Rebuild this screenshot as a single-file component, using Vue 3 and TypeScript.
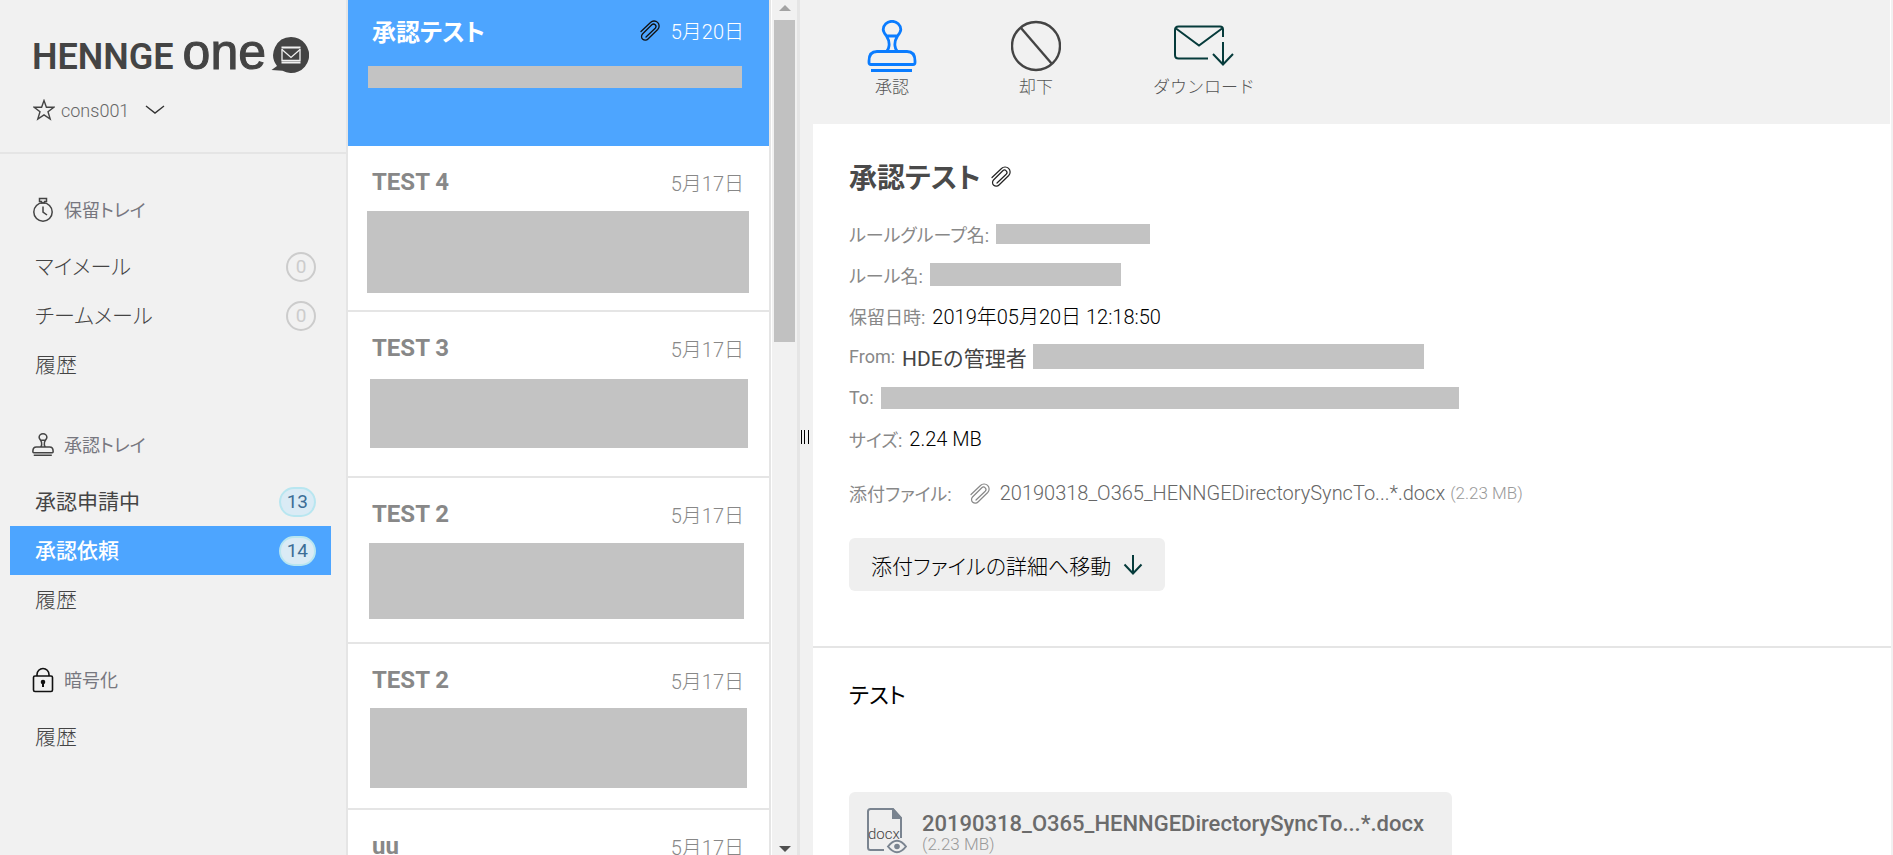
<script setup lang="ts">
interface NavItem {
  label: string
  count?: number
  strong?: boolean
  active?: boolean
}
interface NavSection {
  icon: 'timer' | 'stamp' | 'lock'
  title: string
  items: NavItem[]
}
interface Mask {
  width: number
  height: number
  top: number
  left: number
}
interface Mail {
  subject: string
  date: string
  selected?: boolean
  attached?: boolean
  mask?: Mask
}
interface MetaRow {
  label: string
  value?: string
  soft?: boolean
  mask?: { width: number; height: number }
}

const sections: NavSection[] = [
  {
    icon: 'timer',
    title: '保留トレイ',
    items: [{ label: 'マイメール', count: 0 }, { label: 'チームメール', count: 0 }, { label: '履歴' }],
  },
  {
    icon: 'stamp',
    title: '承認トレイ',
    items: [
      { label: '承認申請中', count: 13, strong: true },
      { label: '承認依頼', count: 14, strong: true, active: true },
      { label: '履歴' },
    ],
  },
  { icon: 'lock', title: '暗号化', items: [{ label: '履歴' }] },
]

const mails: Mail[] = [
  { subject: '承認テスト', date: '5月20日', selected: true, attached: true, mask: { width: 374, height: 22, top: 20, left: 1 } },
  { subject: 'TEST 4', date: '5月17日', mask: { width: 382, height: 82, top: 13, left: 0 } },
  { subject: 'TEST 3', date: '5月17日', mask: { width: 378, height: 69, top: 15, left: 3 } },
  { subject: 'TEST 2', date: '5月17日', mask: { width: 375, height: 76, top: 13, left: 2 } },
  { subject: 'TEST 2', date: '5月17日', mask: { width: 377, height: 80, top: 12, left: 3 } },
  { subject: 'uu', date: '5月17日' },
]

const meta: MetaRow[] = [
  { label: 'ルールグループ名:', mask: { width: 154, height: 20 } },
  { label: 'ルール名:', mask: { width: 191, height: 23 } },
  { label: '保留日時:', value: '2019年05月20日 12:18:50' },
  { label: 'From:', value: 'HDEの管理者', soft: true, mask: { width: 391, height: 25 } },
  { label: 'To:', mask: { width: 578, height: 22 } },
  { label: 'サイズ:', value: '2.24 MB' },
]

const fileName = '20190318_O365_HENNGEDirectorySyncTo...*.docx'
const fileSize = '(2.23 MB)'

const clipPath =
  'M1 11.5L10.5 2.5A5 5 0 0 1 17.7 9.5L8 19A3.7 3.7 0 0 1 2.5 14L11.8 4.8A2.3 2.3 0 0 1 15.2 8.2L6 17'
const stampPath =
  'M19.5 16C17.5 13.5 16.2 12 16.2 9.6A8.8 8.3 0 0 1 33.8 9.6C33.8 12 32.5 13.5 30.5 16C28 20 27.5 23 28 26Q28.3 29 30 31M19.5 16C22 20 22.5 23 22 26Q21.7 29 20 31M19.5 16H30.5M10 31.5H40Q48 31.5 48 41V42.5Q48 44.5 46 44.5H4Q2 44.5 2 42.5V41Q2 31.5 10 31.5ZM4 50.5H45'
</script>

<template>
  <div class="app">
    <aside class="sidebar">
      <header class="brand">
        <div class="logo">
          <span class="logo-company">HENNGE</span>
          <span class="logo-product">one</span>
          <svg class="logo-bubble" width="38" height="38" viewBox="0 0 38 38" aria-hidden="true">
            <path d="M20 1a18 18 0 1 1-8.5 33.800L0.500 34 6 30A18 18 0 0 1 20 1Z" fill="#444" />
            <g fill="none" stroke="#f1f1f1" stroke-width="1.300">
              <path d="M11 13v11.500h18V13" /><path d="M11 13.500l9 8 9-8" />
              <path d="M10.500 11.500h19M10.500 26.500h19" stroke-width="2" />
            </g>
          </svg>
        </div>
        <button class="account" type="button">
          <svg width="22" height="22" viewBox="0 0 22 22" aria-hidden="true">
            <path d="M11 1.500l2.400 6.700 7.400.1-5.800 4.400 2.200 7.300L11 15.800 4.800 20 7 12.700 1.200 8.300l7.400-.1z" fill="none" stroke="#444" stroke-width="1.400" />
          </svg>
          <span class="account-name">cons001</span>
          <svg class="chevron" width="20" height="10" viewBox="0 0 20 10" aria-hidden="true">
            <path d="M1 1l9 7 9-7" fill="none" stroke="#333" stroke-width="1.400" />
          </svg>
        </button>
      </header>
      <nav class="nav">
        <section v-for="section in sections" :key="section.title" class="nav-section">
          <h2 class="nav-title">
            <svg v-if="section.icon === 'timer'" width="22" height="26" viewBox="0 0 22 26" fill="none" stroke="#444" stroke-width="1.500" aria-hidden="true">
              <circle cx="11" cy="15" r="9.200" />
              <path d="M7.500 4.500V1.500h7v3h-2v1.500h-3V4.500zM11 9.500v5.500l4 3" />
            </svg>
            <svg v-else-if="section.icon === 'stamp'" width="22" height="26" viewBox="0 0 50 54" fill="none" stroke="#444" stroke-width="3.500" aria-hidden="true">
              <path :d="stampPath" />
            </svg>
            <svg v-else width="22" height="26" viewBox="0 0 22 26" fill="none" stroke="#111" stroke-width="1.600" aria-hidden="true">
              <rect x="1.500" y="9" width="19" height="15.500" rx="1.500" />
              <path d="M5 9V7.500a6 6 0 0 1 12 0V9" />
              <circle cx="11" cy="15" r="1.500" fill="#111" /><path d="M11 15v5" stroke-width="2" />
            </svg>
            <span class="nav-title-text">{{ section.title }}</span>
          </h2>
          <a
            v-for="item in section.items"
            :key="item.label"
            href="#"
            class="nav-item"
            :class="{ strong: item.strong, active: item.active }"
          >
            <span class="nav-label">{{ item.label }}</span>
            <span v-if="item.count !== undefined" class="badge" :class="{ filled: item.count > 0 }">{{ item.count }}</span>
          </a>
        </section>
      </nav>
    </aside>

    <main class="list">
      <a v-for="(mail, i) in mails" :key="i" href="#" class="mail" :class="{ selected: mail.selected }">
        <span class="mail-head">
          <span class="subject">{{ mail.subject }}</span>
          <svg v-if="mail.attached" width="20" height="21" viewBox="0 0 20 21" fill="none" stroke="#111" stroke-width="1.300" stroke-linecap="round" aria-hidden="true">
            <path :d="clipPath" />
          </svg>
          <time class="date">{{ mail.date }}</time>
        </span>
        <span
          v-if="mail.mask"
          class="mask mail-mask"
          :style="{
            width: mail.mask.width + 'px',
            height: mail.mask.height + 'px',
            marginTop: mail.mask.top + 'px',
            marginLeft: mail.mask.left + 'px',
          }"
        ></span>
      </a>
    </main>

    <div class="scrollbar" aria-hidden="true">
      <svg width="12" height="6" viewBox="0 0 12 6"><path d="M0 6L6 0l6 6z" fill="#a3a3a3" /></svg>
      <div class="thumb"></div>
      <svg class="scroll-down" width="12" height="6" viewBox="0 0 12 6"><path d="M0 0h12L6 6z" fill="#505050" /></svg>
    </div>

    <div class="splitter" role="separator" aria-orientation="vertical">
      <svg width="9" height="14" viewBox="0 0 9 14"><path d="M.5 0v14M3.500 0v14M7.500 0v14" stroke="#000" stroke-width="1" /></svg>
    </div>

    <article class="detail">
      <div class="toolbar">
        <button type="button" class="tool">
          <svg width="50" height="54" viewBox="0 0 50 54" fill="none" stroke="#0a7cff" stroke-width="2.800" aria-hidden="true">
            <path :d="stampPath" />
          </svg>
          <span>承認</span>
        </button>
        <button type="button" class="tool">
          <svg width="50" height="54" viewBox="0 0 50 54" fill="none" stroke="#444" stroke-width="2.400" aria-hidden="true">
            <circle cx="25" cy="26" r="24" /><path d="M10 8l31 36" />
          </svg>
          <span>却下</span>
        </button>
        <button type="button" class="tool">
          <svg width="60" height="54" viewBox="0 0 60 54" fill="none" stroke="#063b3b" stroke-width="2" aria-hidden="true">
            <path d="M34 38.500H4.500Q1 38.500 1 35V10Q1 6.500 4.500 6.500H46Q49 6.500 49 9.500V17" />
            <path d="M2 8.500l23 17 23-17" />
            <path d="M49 22v22.500M39 34l10 10.500L59 34" />
          </svg>
          <span>ダウンロード</span>
        </button>
      </div>

      <header class="message">
        <h1 class="message-title">
          <span>承認テスト</span>
          <svg width="20" height="21" viewBox="0 0 20 21" fill="none" stroke="#222" stroke-width="1.200" stroke-linecap="round" aria-hidden="true">
            <path :d="clipPath" />
          </svg>
        </h1>
        <dl class="meta">
          <div v-for="row in meta" :key="row.label" class="meta-row">
            <dt>{{ row.label }}</dt>
            <dd>
              <span v-if="row.value" :class="{ soft: row.soft }">{{ row.value }}</span>
              <span v-if="row.mask" class="mask" :style="{ width: row.mask.width + 'px', height: row.mask.height + 'px' }"></span>
            </dd>
          </div>
        </dl>
        <div class="attachment">
          <span class="attachment-label">添付ファイル:</span>
          <svg width="20" height="21" viewBox="0 0 20 21" fill="none" stroke="#888" stroke-width="1.200" stroke-linecap="round" aria-hidden="true">
            <path :d="clipPath" />
          </svg>
          <a href="#" class="attachment-name">{{ fileName }}</a>
          <span class="size">{{ fileSize }}</span>
        </div>
        <button type="button" class="jump">
          <span>添付ファイルの詳細へ移動</span>
          <svg width="20" height="20" viewBox="0 0 20 20" fill="none" stroke="#063b3b" stroke-width="2" aria-hidden="true">
            <path d="M10 0v18M1.500 9.500l8.500 9 8.500-9" />
          </svg>
        </button>
      </header>

      <section class="body">
        <p class="body-text">テスト</p>
        <a href="#" class="file-card">
          <svg class="file-icon" width="40" height="46" viewBox="0 0 40 46" aria-hidden="true">
            <path d="M17 42H3.500Q1 42 1 39.500V3.500Q1 1 3.500 1H26l8 9v20" fill="none" stroke="#7a8490" stroke-width="2" />
            <path d="M25 0h1l9 10v1H25z" fill="#7a8490" />
            <text x="1" y="31" class="file-ext">docx</text>
            <path d="M21 38.500Q30 27 39 38.500Q30 50 21 38.500Z" fill="#efefef" stroke="#7a8490" stroke-width="2" />
            <circle cx="30" cy="38.500" r="2.800" fill="#7a8490" />
          </svg>
          <span class="file-text">
            <span class="file-name">{{ fileName }}</span>
            <span class="size">{{ fileSize }}</span>
          </span>
        </a>
      </section>
    </article>
  </div>
</template>

<style>
body {
  margin: 0;
  overflow: hidden;
}
</style>

<style scoped>
* {
  box-sizing: border-box;
}
.app {
  display: flex;
  height: 100vh;
  overflow: hidden;
  background: #f1f1f1;
  color: #444;
  font-family: Roboto, 'Noto Sans CJK JP', sans-serif;
  font-feature-settings: 'palt';
  font-weight: 300;
}
a {
  color: inherit;
  text-decoration: none;
}
button {
  border: 0;
  padding: 0;
  background: none;
  color: inherit;
  font: inherit;
  font-feature-settings: inherit;
  cursor: pointer;
}
h1,
h2,
p,
dl,
dd {
  margin: 0;
}
svg {
  flex: none;
}
.mask {
  display: block;
  background: #c3c3c3;
}

.sidebar {
  flex: none;
  width: 348px;
  border-right: 2px solid #e5e5e5;
}
.brand {
  height: 154px;
  padding: 22px 0 0 32px;
  border-bottom: 2px solid #e5e5e5;
}
.logo {
  display: flex;
  align-items: baseline;
  height: 64px;
  line-height: 60px;
  white-space: nowrap;
}
.logo-company {
  font-size: 36px;
  font-weight: 600;
}
.logo-product {
  margin-left: 9px;
  font-family: 'Liberation Sans', sans-serif;
  font-size: 50px;
  font-weight: 400;
  -webkit-text-stroke: 1px #444;
}
.logo-bubble {
  align-self: flex-start;
  margin: 14px 0 0 5px;
}
.account {
  display: flex;
  align-items: center;
  gap: 6px;
  height: 48px;
  color: #666;
}
.account svg:first-child {
  margin-left: 1px;
}
.account-name {
  font-size: 18px;
}
.chevron {
  margin-left: 10px;
}
.nav {
  padding: 0 15px 0 10px;
}
.nav-section {
  padding-top: 40px;
}
.nav-title {
  display: flex;
  align-items: center;
  gap: 10px;
  height: 32px;
  margin-bottom: 16px;
  padding-left: 22px;
  color: #77777f;
  font-size: 18px;
  font-weight: 400;
}
.nav-title-text {
  padding-bottom: 2px;
}
.nav-item {
  display: flex;
  align-items: center;
  justify-content: space-between;
  height: 49px;
  padding: 0 15px 0 25px;
  font-size: 21px;
}
.nav-label {
  padding-bottom: 4px;
}
.nav-item.strong {
  font-weight: 400;
}
.nav-item.active {
  background: #4da5ff;
  color: #fff;
  font-weight: 500;
}
.badge {
  min-width: 30px;
  height: 30px;
  padding: 0 6px;
  border: 2px solid #ccc;
  border-radius: 15px;
  color: #ccc;
  font-size: 19px;
  font-weight: 400;
  line-height: 26px;
  text-align: center;
}
.badge.filled {
  border-color: #b8e6f0;
  background: #daebf5;
  color: #3c6e96;
}

.list {
  flex: none;
  width: 423px;
  border-right: 2px solid #e5e5e5;
  background: #fff;
}
.mail {
  display: block;
  height: 166px;
  padding: 20px 25px 0 19px;
  border-bottom: 2px solid #e5e5e5;
  color: #888;
}
.mail.selected {
  height: 146px;
  padding-top: 14px;
  border-bottom: 0;
  background: #4da5ff;
  color: #fff;
}
.mail-head {
  display: flex;
  align-items: center;
  height: 32px;
  padding-left: 5px;
  white-space: nowrap;
}
.subject {
  flex: 1;
  font-size: 24px;
  font-weight: 700;
}
.date {
  margin-left: 11px;
  font-size: 20px;
}

.scrollbar {
  display: flex;
  flex: none;
  flex-direction: column;
  align-items: center;
  width: 26px;
  padding: 5px 0 3px;
  border-left: 1px solid #fff;
}
.thumb {
  width: 21px;
  height: 38%;
  margin-top: 9px;
  background: #c1c1c1;
}
.scroll-down {
  margin-top: auto;
}
.splitter {
  display: flex;
  flex: none;
  align-items: center;
  width: 16px;
  padding: 19px 0 0 1px;
  border-left: 3px solid #e5e5e5;
}

.detail {
  flex: 1;
  min-width: 0;
  border-right: 2px solid #f1f1f1;
  background: #fff;
}
.toolbar {
  display: flex;
  gap: 90px;
  height: 124px;
  margin-right: 1px;
  padding: 20px 52px 0;
  background: #f1f1f1;
}
.tool {
  display: flex;
  flex-direction: column;
  align-items: center;
  min-width: 54px;
  height: 80px;
  color: #555;
  font-size: 17px;
  font-feature-settings: normal;
  line-height: 26px;
}
.message {
  padding: 32px 36px 55px;
  border-bottom: 2px solid #e5e5e5;
}
.message-title {
  display: flex;
  align-items: center;
  gap: 10px;
  height: 40px;
  color: #4a4a4a;
  font-size: 28px;
  font-weight: 700;
}
.meta {
  margin-top: 17px;
}
.meta-row {
  display: flex;
  align-items: center;
  gap: 7px;
  height: 41px;
  white-space: nowrap;
}
dt,
.attachment-label {
  color: #888;
  font-size: 18px;
  font-weight: 400;
}
dd {
  display: flex;
  align-items: center;
  gap: 6px;
  color: #000;
  font-size: 20px;
  font-feature-settings: normal;
}
.soft {
  color: #444;
  font-size: 21px;
  font-weight: 400;
}
.attachment {
  display: flex;
  align-items: center;
  height: 40px;
  margin-top: 14px;
  white-space: nowrap;
}
.attachment svg {
  margin: 0 10px 0 18px;
}
.attachment-name {
  margin-right: 5px;
  color: #666;
  font-size: 20px;
}
.size {
  color: #999;
  font-size: 17px;
}
.jump {
  display: flex;
  align-items: center;
  gap: 12px;
  height: 53px;
  margin-top: 25px;
  padding: 0 22px;
  border-radius: 6px;
  background: #efefef;
  color: #000;
  font-size: 21px;
}
.body {
  padding: 32px 36px 0;
}
.body-text {
  height: 112px;
  color: #000;
  font-size: 22px;
  font-weight: 400;
  line-height: 32px;
}
.file-card {
  display: inline-flex;
  gap: 15px;
  height: 100px;
  padding: 16px 28px 0 18px;
  border-radius: 6px;
  background: #efefef;
  white-space: nowrap;
}
.file-ext {
  fill: #444;
  font-size: 15px;
}
.file-text {
  display: flex;
  flex-direction: column;
}
.file-name {
  color: #6b6b6b;
  font-size: 22px;
  font-weight: 500;
  line-height: 32px;
}
.file-text .size {
  line-height: 8px;
}
</style>
